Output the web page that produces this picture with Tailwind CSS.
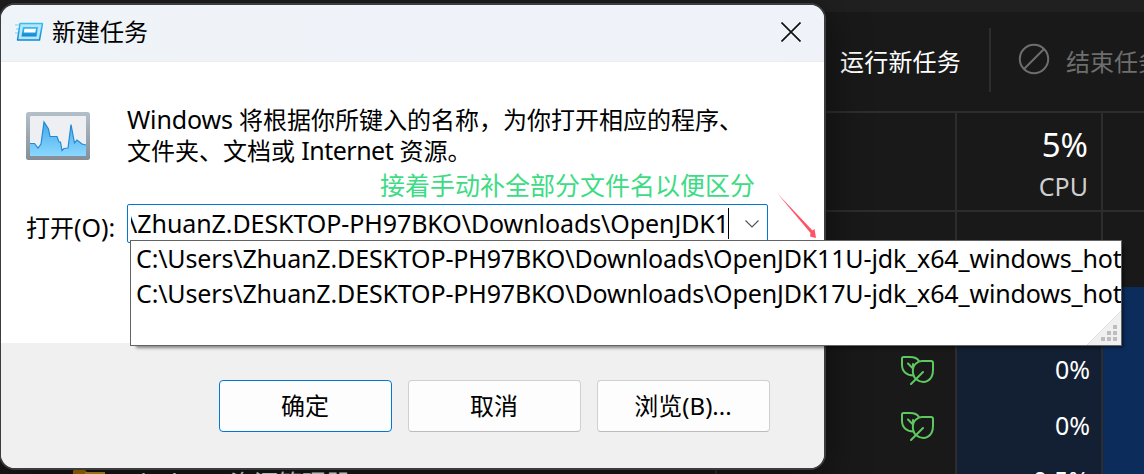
<!DOCTYPE html>
<html lang="zh-CN">
<head>
  <meta charset="UTF-8">
  <title>新建任务</title>
  <script src="https://cdn.jsdelivr.net/npm/@tailwindcss/browser@4"></script>
</head>
<body class="relative w-[1144px] h-[474px] overflow-hidden bg-[#191919] font-['Noto_Sans','Noto_Sans_CJK_SC',sans-serif] text-[24px] text-black">

  <!-- Task manager -->
  <div class="w-[1144px] h-[474px] overflow-hidden flex flex-col text-white whitespace-nowrap">
    <div class="h-3 shrink-0 bg-[#202020]"></div>
    <div class="h-[99px] shrink-0 flex items-center pl-[840px]">
      <span class="w-[121px] tracking-[0.2px]">运行新任务</span>
      <div class="ml-7 mb-1 w-0.5 h-16 bg-[#2d2d2d] shrink-0"></div>
      <svg class="ml-[27px] mb-1.5 size-8 shrink-0" viewBox="0 0 32 32" fill="none" stroke="#6e6e6e" stroke-width="2">
        <circle cx="16" cy="16" r="14.2"/>
        <path d="M6 26L26 6"/>
      </svg>
      <span class="ml-4 text-[#6e6e6e]">结束任务</span>
    </div>
    <div class="h-0.5 shrink-0 bg-[#2d2d2d]"></div>

    <div class="h-[99px] shrink-0 flex border-b-2 border-[#2d2d2d]">
      <div class="w-[717px] border-r-2 border-[#2d2d2d]"></div>
      <div class="w-[240px] border-r-2 border-[#2d2d2d]"></div>
      <div class="w-[146px] border-r-2 border-[#2d2d2d] pr-[13px] pt-2.5 text-right">
        <div class="text-[33px] leading-[44px]">5%</div>
        <div class="text-[25px] leading-[38px] text-[#cfcfcf]">CPU</div>
      </div>
    </div>

    <div class="h-[75px] shrink-0 flex">
      <div class="w-[717px] border-r-2 border-[#2d2d2d]"></div>
      <div class="w-[240px] border-r-2 border-[#2d2d2d]"></div>
      <div class="w-[146px] border-r-2 border-[#2d2d2d]"></div>
    </div>

    <div class="grow flex">
      <div class="w-[717px] border-r-2 border-[#2d2d2d] pt-[168px]">
        <div class="h-14 flex items-center pl-9">
          <svg class="w-4 h-3 mt-[-14px]" viewBox="0 0 16 12" fill="none" stroke="#9a9a9a" stroke-width="2"><path d="M4 10L8 6L12 10"/></svg>
          <svg class="ml-[21px] w-8 h-7 shrink-0" viewBox="0 0 32 28">
            <path d="M0 3q0-3 3-3h8l3 3h18v25H0z" fill="#b57a00"/>
            <path d="M12 3h20v25H12z" fill="#d9a020"/>
          </svg>
          <span class="ml-3"><span class="text-[25px]">Windows</span> 资源管理器</span>
        </div>
      </div>
      <div class="w-[240px] border-r-2 border-[#2d2d2d] pt-[55px] pl-[184px]">
        <div class="h-14 flex items-center">
          <svg class="w-[34px] h-[30px]" viewBox="0 0 34 30" fill="none" stroke="#5fc75f" stroke-width="2" stroke-linecap="round" stroke-linejoin="round">
            <path d="M12.500 20.500C6 20.500 1 16.500 1 10V3.500Q1 2 2.500 2H9C13.500 2 16.500 3.500 18 6"/>
            <path d="M15.500 24.500C11 21 10.500 12 15 8.500C17 6.500 19 6 21 6H30Q32 6 32 8V15C32 26 23 30 15.500 24.500Z"/>
            <path d="M10 29L22 17M7 8.500L12 13.500V9"/>
          </svg>
        </div>
        <div class="h-14 flex items-center">
          <svg class="w-[34px] h-[30px]" viewBox="0 0 34 30" fill="none" stroke="#5fc75f" stroke-width="2" stroke-linecap="round" stroke-linejoin="round">
            <path d="M12.500 20.500C6 20.500 1 16.500 1 10V3.500Q1 2 2.500 2H9C13.500 2 16.500 3.500 18 6"/>
            <path d="M15.500 24.500C11 21 10.500 12 15 8.500C17 6.500 19 6 21 6H30Q32 6 32 8V15C32 26 23 30 15.500 24.500Z"/>
            <path d="M10 29L22 17M7 8.500L12 13.500V9"/>
          </svg>
        </div>
      </div>
      <div class="w-[146px] border-r-2 border-[#2d2d2d] bg-[#132033] pt-[54px] pr-[11px] text-right text-[25px] leading-[56px]">
        <div>0%</div>
        <div>0%</div>
        <div class="-mt-px pr-px">0.5%</div>
      </div>
      <div class="grow bg-[#0c2d5c]"></div>
    </div>
  </div>

  <!-- New task dialog -->
  <div class="absolute -left-px top-[3px] w-[827px] h-[467px] rounded-[16px] border-2 border-[#3d3d3f] bg-white overflow-hidden flex flex-col shadow-[0_8px_40px_rgba(0,0,0,0.5)] whitespace-nowrap">
    <div class="h-[57px] shrink-0 flex items-center bg-linear-to-r from-[#eff4f8] to-[#f0f2fa] border-b border-[#ececee] pl-[14px] pb-0.5">
      <svg class="w-[29px] h-[20px] shrink-0" viewBox="0 0 29 20">
        <defs>
          <linearGradient id="run" x2="0" y2="1"><stop stop-color="#39bdf0"/><stop offset="1" stop-color="#1089d3"/></linearGradient>
        </defs>
        <path d="M0 3H5M1 7H4M0 11H4" stroke="#9adcf7" stroke-width="1.500"/>
        <path d="M5 1.500H27.500L24.500 18H2.500Z" fill="#b5e6fb" stroke="url(#run)" stroke-width="1.500" stroke-linejoin="round"/>
        <path d="M8 5H23L21.500 14.500H6.500Z" fill="url(#run)"/>
        <path d="M9.500 6.800H21L20.300 10.500H8.800Z" fill="#fff"/>
      </svg>
      <span class="ml-2">新建任务</span>
      <svg class="ml-auto mr-[23px] size-[20px]" viewBox="0 0 20 20" stroke="#111" stroke-width="1.700"><path d="M0.500 0.500L19.500 19.500M19.500 0.500L0.500 19.500"/></svg>
    </div>

    <div class="h-[281px] shrink-0 pl-[25px]">
      <div class="flex pt-[42px]">
        <svg class="mt-2 w-16 h-12 shrink-0" viewBox="0 0 64 48">
          <defs>
            <linearGradient id="frame" x2="0" y2="1"><stop stop-color="#b3c0ca"/><stop offset="1" stop-color="#858e97"/></linearGradient>
            <linearGradient id="area" x2="0" y2="1"><stop stop-color="#45a9e8"/><stop offset="1" stop-color="#8bd8ff"/></linearGradient>
          </defs>
          <rect width="64" height="48" rx="2.500" fill="url(#frame)"/>
          <rect x="4" y="4" width="56" height="40" rx="1" fill="#eeeff2"/>
          <path d="M4 31.500H8.500L12 36L15 32L18 10L22.500 17L24 24.500H31L33 30H34.500L36 38.500L38 36.500L42 36L45 12.500L48.500 31L51 28L56 32L60 33V44H4Z" fill="url(#area)"/>
          <path d="M4 31.500H8.500L12 36L15 32L18 10L22.500 17L24 24.500H31L33 30H34.500L36 38.500L38 36.500L42 36L45 12.500L48.500 31L51 28L56 32L60 33" fill="none" stroke="#2489d5" stroke-width="1.200"/>
        </svg>
        <div class="ml-[37px] h-[63px] leading-[31px]">
          <div><span class="text-[25px] tracking-[-0.15px]">Windows</span> 将根据你所键入的名称，为你打开相应的程序、</div>
          <div>文件夹、文档或 <span class="text-[25px] tracking-[-0.5px]">Internet</span> 资源。</div>
        </div>
      </div>
      <div class="h-[37px] pl-[354px] leading-[36px] text-[25px] text-[#3ddc84]">接着手动补全部分文件名以便区分</div>
      <div class="flex items-start">
        <label class="w-[101px] leading-[47px]">打开<span class="text-[25px]">(O):</span></label>
        <div class="w-[641px] h-[39px] border border-[#0078d4] rounded-[2px] flex items-center overflow-hidden pl-[3px]">
          <span class="w-[597px] overflow-hidden flex justify-end text-[25px] tracking-[-0.08px]"><span class="-mr-px">\ZhuanZ.DESKTOP-PH97BKO\Downloads\OpenJDK1</span></span>
          <span class="w-px h-[31px] bg-black shrink-0"></span>
          <svg class="ml-4 w-[14px] h-2 shrink-0" viewBox="0 0 14 8" fill="none" stroke="#555" stroke-width="1.200"><path d="M0.500 0.500L7 7L13.500 0.500"/></svg>
        </div>
      </div>
    </div>

    <div class="grow bg-[#f0f0f0] flex gap-4 pt-[37px] pl-[218px]">
      <button class="w-[173px] h-[52px] pr-px rounded-[4px] border border-[#0078d4] bg-[#fdfdfd]">确定</button>
      <button class="w-[173px] h-[52px] pr-px rounded-[4px] border border-[#d0d0d0] border-b-[#bbb] bg-[#fdfdfd]">取消</button>
      <button class="w-[173px] h-[52px] pr-px rounded-[4px] border border-[#d0d0d0] border-b-[#bbb] bg-[#fdfdfd]">浏览(B)...</button>
    </div>
  </div>

  <!-- Autocomplete list -->
  <div class="absolute left-[130px] top-[240px] w-[992px] h-[106px] border border-[#646464] bg-white overflow-hidden pl-[5px] text-[25px] leading-[35px] tracking-[-0.15px] whitespace-nowrap shadow-[4px_4px_3px_-2px_rgba(0,0,0,0.45)]">
    <div>C:\Users\ZhuanZ.DESKTOP-PH97BKO\Downloads\OpenJDK11U-jdk_x64_windows_hot</div>
    <div>C:\Users\ZhuanZ.DESKTOP-PH97BKO\Downloads\OpenJDK17U-jdk_x64_windows_hot</div>
    <svg class="absolute right-0 bottom-0 size-[34px]" viewBox="0 0 34 34">
      <path d="M34 0V34H0Z" fill="#f0f0f0"/>
      <path d="M0 34L34 0" stroke="#e0e0e0"/>
      <path d="M26 14h4v4h-4zM20 20h4v4h-4zM26 20h4v4h-4zM14 26h4v4h-4zM20 26h4v4h-4zM26 26h4v4h-4z" fill="#bdbdbd"/>
    </svg>
  </div>

  <!-- Arrow pointing at the list -->
  <svg class="absolute left-[776px] top-[190px] w-[44px] h-[50px]" viewBox="0 0 44 50">
    <path d="M1 3L36.500 40.500L38.500 39L40 48L34 46.500L34.500 43Z" fill="#ff5263"/>
  </svg>
</body>
</html>
